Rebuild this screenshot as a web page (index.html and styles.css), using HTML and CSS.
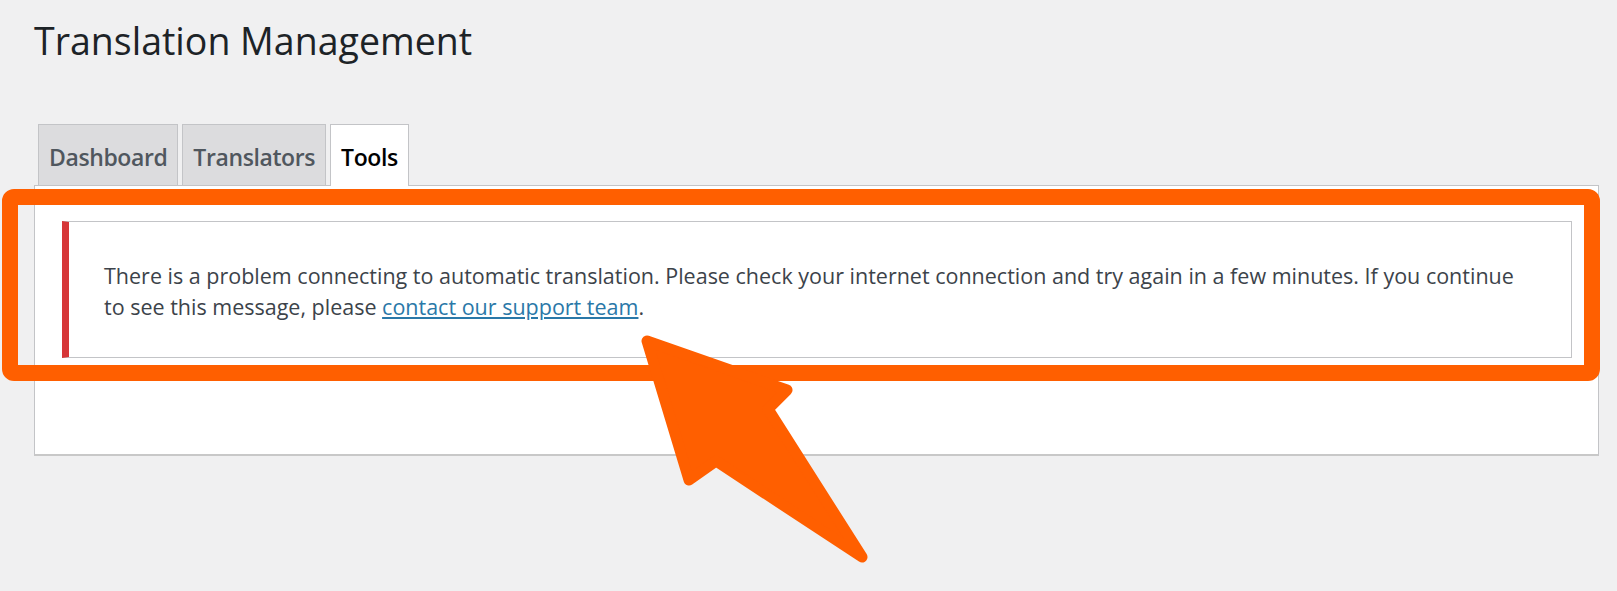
FILE: index.html
```html
<!DOCTYPE html>
<html lang="en">
<head>
<meta charset="utf-8">
<title>Translation Management</title>
<link rel="stylesheet" href="styles.css">
</head>
<body>
<div class="wrap">
  <h1 class="page-title">Translation Management</h1>
  <nav class="tabs">
    <a class="tab" href="#">Dashboard</a>
    <a class="tab" href="#">Translators</a>
    <a class="tab tab-active" href="#">Tools</a>
  </nav>
  <div class="panel">
    <div class="notice">
      <p class="notice-text">There is a problem connecting to automatic translation. Please check your internet connection and try again in a few minutes. If you continue to see this message, please <a class="notice-link" href="#">contact our support team</a>.</p>
    </div>
  </div>
</div>
<div class="highlight"></div>
<svg class="arrow" width="260" height="260" viewBox="630 325 260 260" xmlns="http://www.w3.org/2000/svg">
  <polygon points="647,341 787,390 768,409 862,557 716,461 689,480" fill="#ff5f00" stroke="#ff5f00" stroke-width="11" stroke-linejoin="round"/>
</svg>
</body>
</html>
```
FILE: styles.css
```css
html, body {
  margin: 0;
  padding: 0;
}
body {
  background: #f0f0f1;
  width: 1617px;
  height: 591px;
  overflow: hidden;
  position: relative;
  font-family: "Open Sans", "Noto Sans", sans-serif;
  color: #3c434a;
}
.wrap {
  padding: 0 18px 0 34px;
}
.page-title {
  margin: 0;
  padding-top: 16px;
  font-size: 37.5px;
  line-height: 50px;
  font-weight: 400;
  color: #1d2327;
}
.tabs {
  display: flex;
  gap: 4px;
  margin: 58px 0 -1px 4px;
  position: relative;
  z-index: 1;
}
.tab {
  display: block;
  height: 60px;
  line-height: 64px;
  padding: 0 10px;
  background: #dcdcde;
  border: 1px solid #c3c4c7;
  border-bottom: none;
  color: #50575e;
  font-size: 23px;
  font-weight: 600;
  text-decoration: none;
  letter-spacing: -0.4px;
}
.tab-active {
  background: #fff;
  color: #000;
  height: 61px;
}
.panel {
  background: #fff;
  border: 1px solid #c3c4c7;
  border-bottom: 2px solid #c8c8c8;
  height: 233px;
  padding: 35px 26px 0 27px;
}
.notice {
  border: 1px solid #c3c4c7;
  border-left: 7px solid #d63638;
  padding: 38px 40px 35px 35px;
}
.notice-text {
  margin: 0;
  font-size: 21.5px;
  line-height: 31px;
  color: #3c434a;
}
.notice-link {
  color: #2a78a8;
  text-decoration: underline;
}
.highlight {
  position: absolute;
  left: 2px;
  top: 189px;
  width: 1566px;
  height: 160px;
  border: 16px solid #ff5f00;
  border-radius: 12px;
}
.arrow {
  position: absolute;
  left: 630px;
  top: 325px;
}
```
